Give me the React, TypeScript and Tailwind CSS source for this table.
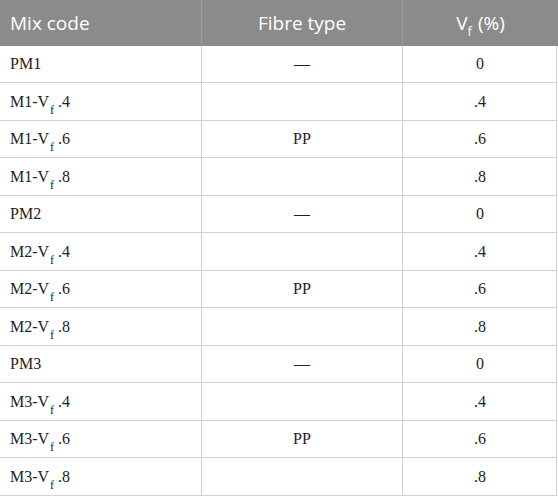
import React from 'react';

type Row = { code: string; sub?: string; tail?: string; fibre: string; vf: string };

const groups = ['1', '2', '3'];

const rows: Row[] = groups.flatMap((g) => [
  { code: `PM${g}`, fibre: '—', vf: '0' },
  { code: `M${g}-V`, sub: 'f', tail: ' .4', fibre: '', vf: '.4' },
  { code: `M${g}-V`, sub: 'f', tail: ' .6', fibre: 'PP', vf: '.6' },
  { code: `M${g}-V`, sub: 'f', tail: ' .8', fibre: '', vf: '.8' },
]);

const App: React.FC = () => {
  return (
    <div className="w-[558px] h-[497px] bg-white overflow-hidden">
      {/* Header */}
      <div
        className="grid grid-cols-[202px_201px_155px] h-[46px] bg-[#8b8b8b] text-white text-[19px]"
        style={{ fontFamily: '"Open Sans", sans-serif' }}
      >
        <div className="flex items-center pl-[10px] border-r border-[#9c9c9c]">Mix code</div>
        <div className="flex items-center justify-center border-r border-[#9c9c9c]">Fibre type</div>
        <div className="flex items-center justify-center">
          <span>
            V<sub className="text-[13px] align-[-3px] leading-none">f</sub>
            <span className="ml-[6px]">(%)</span>
          </span>
        </div>
      </div>

      {/* Body */}
      <div
        className="border-r border-[#cfcfcf] w-[557px] text-[16px] text-[#222]"
        style={{ fontFamily: '"Liberation Serif", serif' }}
      >
        {rows.map((r, i) => (
          <div
            key={i}
            className={`grid grid-cols-[202px_201px_154px] border-b border-[#d2d2d2] ${
              i % 2 === 0 ? 'h-[37px]' : 'h-[38px]'
            }`}
          >
            <div className="flex items-center pl-[10px] border-r border-[#d2d2d2]">
              <span className="whitespace-pre">
                {r.code}
                {r.sub && <sub className="text-[12px] align-[-4px] leading-none ml-[1px]">{r.sub}</sub>}
                {r.tail}
              </span>
            </div>
            <div className="flex items-center justify-center border-r border-[#d2d2d2]">{r.fibre}</div>
            <div className="flex items-center justify-center">{r.vf}</div>
          </div>
        ))}
      </div>
    </div>
  );
};

export default App;
